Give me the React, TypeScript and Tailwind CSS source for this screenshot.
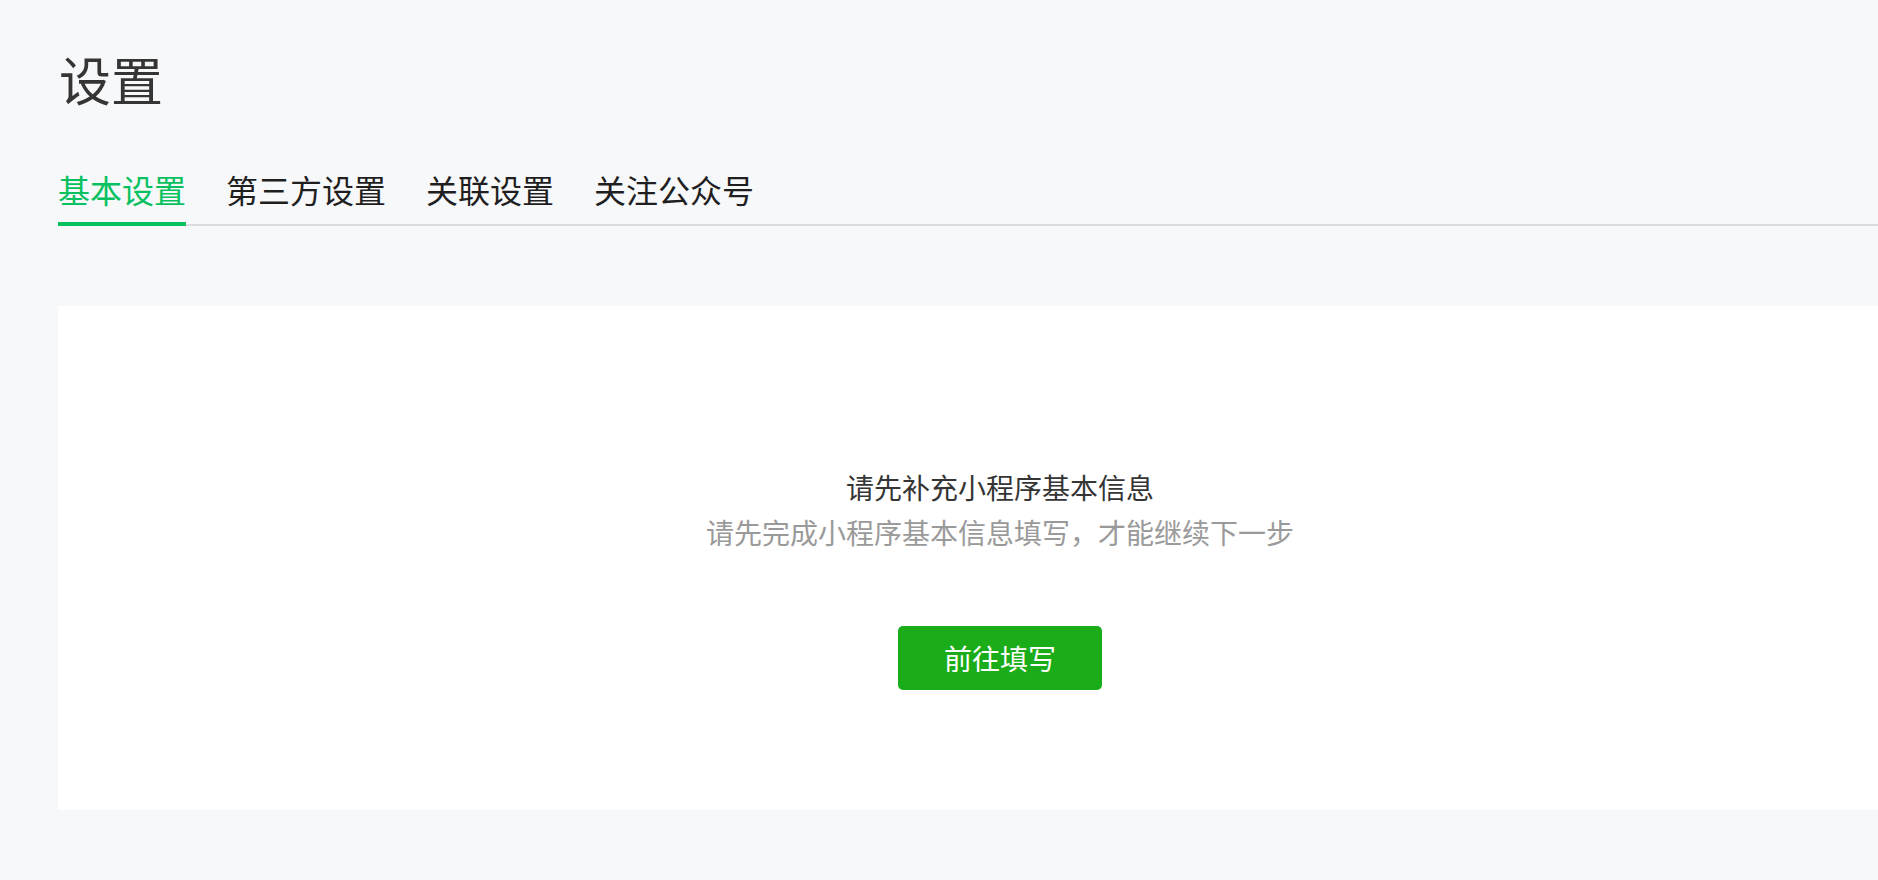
const TABS = ["基本设置", "第三方设置", "关联设置", "关注公众号"];

export default function App() {
  return (
    <div
      className="min-h-screen w-full overflow-hidden bg-[#f7f8fa]"
      style={{ fontFamily: '"Noto Sans CJK SC", "Noto Sans", sans-serif' }}
    >
      <div className="pl-[58px]">
        <h1 className="pt-[53px] pl-[1px] text-[52px] font-normal leading-[52px] text-[#353535]">
          设置
        </h1>

        {/* tabs */}
        <div className="mt-[68px] flex gap-[40px] border-b-2 border-[#dcdde0]">
          {TABS.map((t, i) => (
            <div
              key={t}
              className={
                i === 0
                  ? "-mb-[2px] border-b-4 border-[#07c160] pb-[17px] text-[32px] leading-[32px] text-[#07c160]"
                  : "-mb-[2px] border-b-4 border-transparent pb-[17px] text-[32px] leading-[32px] text-[#1f1f1f]"
              }
            >
              {t}
            </div>
          ))}
        </div>

        {/* empty state card */}
        <div className="mt-[80px] flex h-[504px] w-[1884px] flex-col items-center bg-white pt-[167px]">
          <p className="text-[28px] leading-[28px] text-[#353535]">请先补充小程序基本信息</p>
          <p className="mt-[17px] text-[28px] leading-[28px] text-[#9a9a9a]">
            请先完成小程序基本信息填写，才能继续下一步
          </p>
          <button className="mt-[80px] flex h-[64px] w-[204px] items-center justify-center rounded-[5px] bg-[#1aad19] text-[28px] text-white">
            前往填写
          </button>
        </div>
      </div>
    </div>
  );
}
